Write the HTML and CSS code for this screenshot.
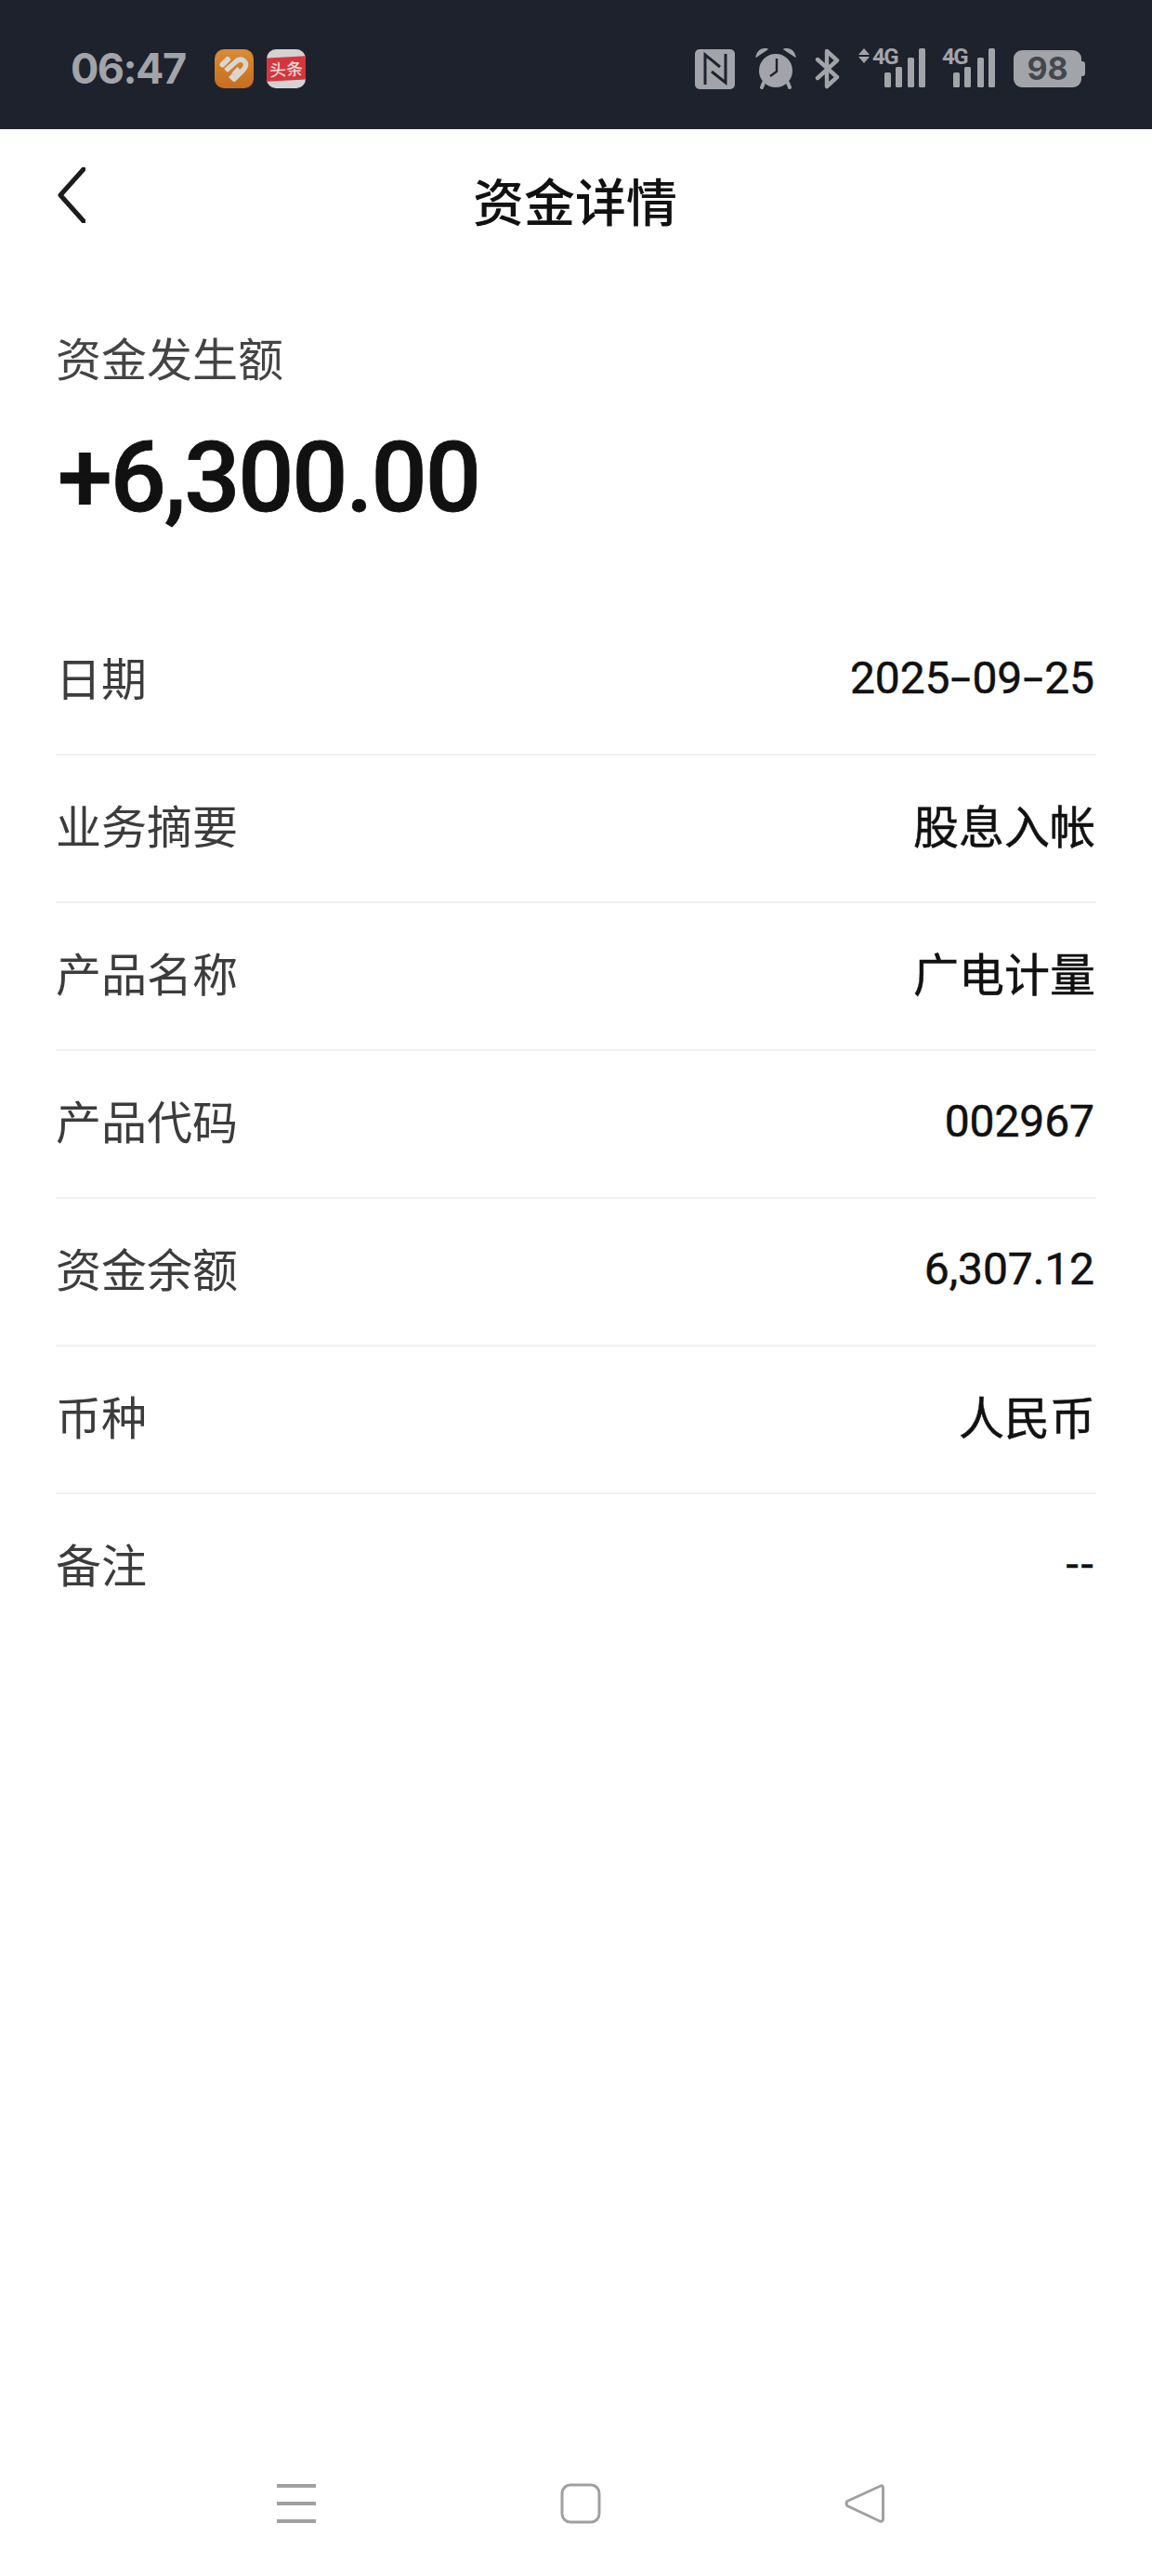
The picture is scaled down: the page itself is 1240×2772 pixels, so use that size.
FILE: index.html
```html
<!DOCTYPE html>
<html lang="zh-CN">
<head>
<meta charset="utf-8">
<title>资金详情</title>
<link rel="stylesheet" href="styles.css">
</head>
<body>
<div class="screen">
  <header class="statusbar">
    <div class="status-left">
      <span class="time">06:47</span>
      <span class="apps">
        <svg class="app" viewBox="0 0 42 42" width="42" height="42">
          <defs><linearGradient id="og" x1="0" y1="0" x2="0" y2="1"><stop offset="0" stop-color="#d98c38"/><stop offset="1" stop-color="#c76d1b"/></linearGradient></defs>
          <rect width="42" height="42" rx="10" fill="url(#og)"/>
          <path d="M8.500 16.500 L14 11" fill="none" stroke="#d9d6d2" stroke-width="6" stroke-linecap="round"/>
          <path d="M12 23 L24 12.500 C29 9 34 13 33.500 17.500 C33.300 19.500 32 21 30.500 22.500 L21 32 L17 28" fill="none" stroke="#d9d6d2" stroke-width="5.500" stroke-linejoin="round"/>
          <path d="M20 27 L26 20.500" fill="none" stroke="#d9d6d2" stroke-width="4.500"/>
        </svg>
        <span class="toutiao"><span class="toutiao-band">头条</span></span>
      </span>
    </div>
    <div class="status-right">
      <svg class="nfc" viewBox="0 0 43 43" width="43" height="43">
        <rect width="43" height="43" rx="5" fill="#a3a4a9"/>
        <path d="M11 38 V6 L27 19" fill="none" stroke="#1e222d" stroke-width="3"/>
        <path d="M18 24 L33 36 V5" fill="none" stroke="#1e222d" stroke-width="3"/>
      </svg>
      <svg class="alarm" viewBox="0 0 44 44" width="44" height="44">
        <circle cx="22" cy="24" r="18" fill="#a3a4a9"/>
        <path d="M1 9 C3 2 8 0 13 1 Z M43 9 C41 2 36 0 31 1 Z" fill="#a3a4a9" stroke="#a3a4a9" stroke-width="1.500" stroke-linejoin="round"/>
        <path d="M9 37 L7 42 M35 37 L37 42" stroke="#a3a4a9" stroke-width="4" stroke-linecap="round"/>
        <path d="M23 11 V25 L16 30" fill="none" stroke="#1e222d" stroke-width="2.400"/>
      </svg>
      <svg class="bt" viewBox="0 0 28 44" width="28" height="44">
        <path d="M3 12 L24 31 L13 41 V3 L24 13 L3 32" fill="none" stroke="#a3a4a9" stroke-width="4.400" stroke-linejoin="round" stroke-linecap="round"/>
      </svg>
      <span class="signal signal-a">
        <svg class="updown" viewBox="0 0 12 16" width="12" height="16"><path d="M0 7 L6 0 L12 7 Z M0 9 L6 16 L12 9 Z" fill="#a3a4a9"/></svg>
        <span class="sig-text">4G</span>
        <svg class="bars" viewBox="0 0 44 42" width="44" height="42">
          <rect x="0" y="26" width="7" height="16" rx="1.500" fill="#a3a4a9"/>
          <rect x="12" y="20" width="7" height="22" rx="1.500" fill="#a3a4a9"/>
          <rect x="25" y="10" width="7" height="32" rx="1.500" fill="#a3a4a9"/>
          <rect x="37" y="0" width="7" height="42" rx="1.500" fill="#a3a4a9"/>
        </svg>
      </span>
      <span class="signal signal-b">
        <span class="sig-text">4G</span>
        <svg class="bars" viewBox="0 0 45 42" width="45" height="42">
          <rect x="0" y="26" width="7" height="16" rx="1.500" fill="#a3a4a9"/>
          <rect x="12" y="20" width="7" height="22" rx="1.500" fill="#a3a4a9"/>
          <rect x="26" y="10" width="7" height="32" rx="1.500" fill="#a3a4a9"/>
          <rect x="38" y="0" width="7" height="42" rx="1.500" fill="#a3a4a9"/>
        </svg>
      </span>
      <span class="battery"><span class="battery-level">98</span><span class="battery-cap"></span></span>
    </div>
  </header>

  <nav class="topbar">
    <svg class="back" viewBox="0 0 30 60" width="30" height="60">
      <path d="M28 2 L3 30 L28 58" fill="none" stroke="#1c1c1c" stroke-width="5" stroke-linecap="round" stroke-linejoin="round"/>
    </svg>
    <h1 class="title">资金详情</h1>
  </nav>

  <section class="summary">
    <div class="summary-label">资金发生额</div>
    <div class="summary-amount">+6,300.00</div>
  </section>

  <section class="rows">
    <div class="row"><span class="row-label">日期</span><span class="row-value num">2025<span class="hy">-</span>09<span class="hy">-</span>25</span></div>
    <div class="row"><span class="row-label">业务摘要</span><span class="row-value">股息入帐</span></div>
    <div class="row"><span class="row-label">产品名称</span><span class="row-value">广电计量</span></div>
    <div class="row"><span class="row-label">产品代码</span><span class="row-value num">002967</span></div>
    <div class="row"><span class="row-label">资金余额</span><span class="row-value num">6,307.12</span></div>
    <div class="row"><span class="row-label">币种</span><span class="row-value">人民币</span></div>
    <div class="row"><span class="row-label">备注</span><span class="row-value num"><span class="hy hy-short">-</span><span class="hy hy-short">-</span></span></div>
  </section>

  <footer class="navbar">
    <svg viewBox="0 0 44 44" width="44" height="44">
      <path d="M1 3 H43 M1 22 H43 M1 41 H43" stroke="#a0a0a0" stroke-width="4"/>
    </svg>
    <svg viewBox="0 0 44 44" width="44" height="44">
      <rect x="2" y="2" width="40" height="40" rx="9" fill="none" stroke="#a0a0a0" stroke-width="3"/>
    </svg>
    <svg viewBox="0 0 44 44" width="44" height="44">
      <path d="M39 3 Q41 2 41.500 5 V39 Q41 42 38 41 L3 24.500 Q1 22 3 19.500 Z" fill="none" stroke="#a0a0a0" stroke-width="3" stroke-linejoin="round"/>
    </svg>
  </footer>
</div>
</body>
</html>
```
FILE: styles.css
```css
* { box-sizing: border-box; }
html, body { margin: 0; padding: 0; background: #fff; }
body { font-family: "Noto Sans CJK SC", "Liberation Sans", sans-serif; }
.screen { width: 1240px; height: 2772px; display: flex; flex-direction: column; }

.statusbar {
  height: 139px; background: #1e222d; flex: none;
  display: flex; justify-content: space-between; align-items: center;
  padding: 9px 72px 0 76px;
}
.status-left { display: flex; align-items: center; gap: 31px; }
.time { font: 700 45px/50px Inter, sans-serif; color: #a3a4a9; letter-spacing: -1.5px; }
.apps { display: flex; gap: 14px; }
.app { display: block; }
.toutiao {
  width: 42px; height: 42px; border-radius: 10px; background: #d3d3d5;
  display: flex; align-items: center; overflow: hidden;
}
.toutiao-band {
  width: 100%; height: 24px; background: #d4363c; color: #e8d8d8;
  font: 500 17px/24px "Noto Sans CJK SC", sans-serif; text-align: center;
  transform: rotate(-3deg) scale(1.05);
}
.status-right { display: flex; align-items: center; gap: 20px; }
.status-right svg { display: block; }
.alarm { margin-left: 2px; }
.signal { position: relative; display: flex; height: 44px; justify-content: flex-end; }
.signal-a { width: 72px; margin-left: -1px; }
.signal-b { width: 57px; margin-left: -2px; }
.updown { position: absolute; left: 0; top: 0; }
.sig-text {
  position: absolute; top: 0; font: 700 24px/18px Roboto, sans-serif;
  color: #a3a4a9; letter-spacing: -1.5px;
}
.signal-a .sig-text { left: 15px; }
.signal-b .sig-text { left: 0; }
.battery { display: flex; align-items: center; }
.battery-level {
  width: 73px; height: 40px; border-radius: 9px; background: #a3a4a9; color: #45474f;
  font: 700 34px/40px Inter, sans-serif; text-align: center;
}
.battery-cap { width: 4px; height: 16px; background: #a3a4a9; border-radius: 0 3px 3px 0; }

.topbar { position: relative; height: 138px; flex: none; display: flex; justify-content: center; padding: 43px 2px 0 0; }
.back { position: absolute; left: 62px; top: 41px; }
.title { margin: 0; font: 500 55px/64px "Noto Sans CJK SC", sans-serif; color: #111; }

.summary { padding: 72px 60px 0; flex: none; }
.summary-label { font: 400 49px/70px "Noto Sans CJK SC", sans-serif; color: #444; }
.summary-amount { margin-top: 36px; font: 500 106px/118px Roboto, "Liberation Sans", sans-serif; color: #111; letter-spacing: -2.2px; padding-left: 2px; -webkit-text-stroke: 0.8px #111; }

.rows { margin: 81px 60px 0; flex: none; }
.row {
  height: 159px; padding-bottom: 9px; display: flex; justify-content: space-between; align-items: center;
  border-bottom: 2px solid #f1f1f1;
}
.row:last-child { border-bottom-color: transparent; }
.row-label { font: 400 49px/64px "Noto Sans CJK SC", sans-serif; color: #3c3c3c; }
.row-value { font: 400 49px/64px "Noto Sans CJK SC", sans-serif; color: #111; padding-right: 1px; -webkit-text-stroke: 0.5px #111; }
.num { font: 400 48px/64px Roboto, sans-serif; letter-spacing: -0.1px; padding: 4px 2px 0 0; -webkit-text-stroke: 0.5px #111; }
.hy { display: inline-block; width: 24px; text-align: center; transform: scaleX(1.6); }
.hy-short { width: 16px; transform: none; }

.navbar {
  margin-top: auto; margin-bottom: 56px; flex: none;
  display: flex; padding: 0 287px 0 297px; justify-content: space-between;
}
.navbar svg { display: block; }
```
